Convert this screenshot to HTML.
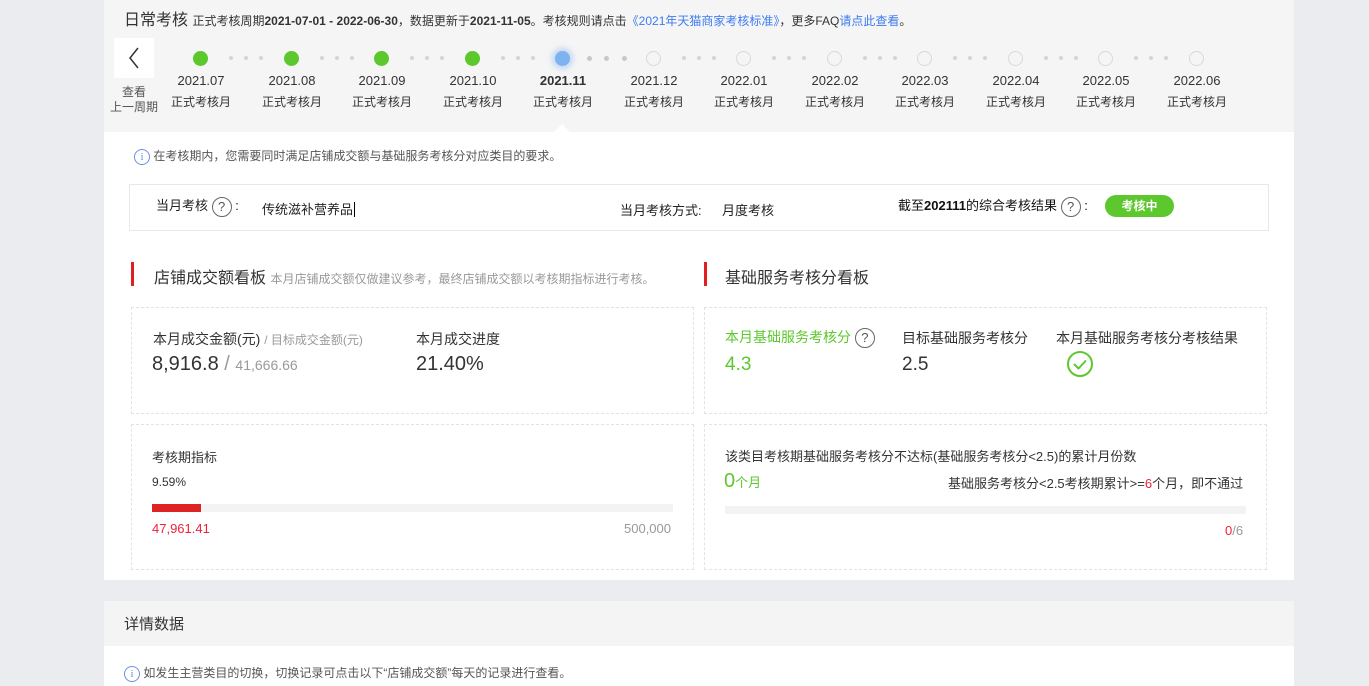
<!DOCTYPE html>
<html><head><meta charset="utf-8"><style>
*{margin:0;padding:0;box-sizing:border-box}
body{width:1369px;height:683px;background:#ebecef;font-family:"Liberation Sans","Noto Sans CJK SC",sans-serif;color:#333;position:relative;overflow:hidden}
.a{position:absolute;white-space:nowrap}
.top{position:absolute;left:104px;top:0;width:1190px;height:132px;background:#f5f5f5}
.main{position:absolute;left:104px;top:132px;width:1190px;height:448px;background:#fff}
.det{position:absolute;left:104px;top:601px;width:1190px;height:45px;background:#f4f4f4}
.det2{position:absolute;left:104px;top:646px;width:1190px;height:40px;background:#fff}
.c{position:absolute;width:15px;height:15px;border-radius:50%;top:51px}
.g{background:#5cc82e}
.e{border:1px solid #d9d9d9;background:#f5f5f5}
.d{position:absolute;width:4px;height:4px;border-radius:50%;background:#d5d5d5;top:56px}
.lab{position:absolute;width:80px;text-align:center;font-size:13px;color:#333}
.box{position:absolute;border:1px dashed #e3e3e3}
.q{display:inline-block;width:20px;height:20px;border:1px solid #666;border-radius:50%;font-size:13px;text-align:center;line-height:18px;color:#555;vertical-align:middle}
.info{display:inline-block;width:16px;height:16px;border:1px solid #6b8fe8;border-radius:50%;font-size:11px;text-align:center;line-height:14px;color:#6b8fe8;vertical-align:middle;font-family:"Liberation Serif",serif}
</style></head><body>
<div class="top"></div>
<div class="main"></div>
<div class="det"></div>
<div class="det2"></div>

<div class="a" style="left:124px;top:6px;font-size:16px;color:#333">日常考核 <span style="font-size:12px;color:#333">正式考核周期<b>2021-07-01 - 2022-06-30</b>，数据更新于<b>2021-11-05</b>。考核规则请点击<span style="color:#3d7cf0">《2021年天猫商家考核标准》</span>，更多FAQ<span style="color:#3d7cf0">请点此查看</span>。</span></div>

<div class="a" style="left:114px;top:38px;width:40px;height:40px;background:#fff;text-align:center"><svg width="40" height="40"><path d="M24 10 L16 20 L24 30" stroke="#333" stroke-width="1.5" fill="none"/></svg></div>
<div class="a" style="left:108px;top:85px;width:52px;text-align:center;font-size:12px;line-height:15px;color:#555;white-space:normal">查看<br>上一周期</div>

<div class="c g" style="left:193px"></div>
<div class="c g" style="left:284px"></div>
<div class="c g" style="left:374px"></div>
<div class="c g" style="left:465px"></div>
<div class="c" style="left:555px;background:#7fb2f0;box-shadow:0 0 6px 3px rgba(127,178,240,.45)"></div>
<div class="c e" style="left:646px"></div>
<div class="c e" style="left:736px"></div>
<div class="c e" style="left:827px"></div>
<div class="c e" style="left:917px"></div>
<div class="c e" style="left:1008px"></div>
<div class="c e" style="left:1098px"></div>
<div class="c e" style="left:1189px"></div>

<div class="d" style="left:229px"></div><div class="d" style="left:244px"></div><div class="d" style="left:259px"></div>
<div class="d" style="left:320px"></div><div class="d" style="left:335px"></div><div class="d" style="left:350px"></div>
<div class="d" style="left:410px"></div><div class="d" style="left:425px"></div><div class="d" style="left:440px"></div>
<div class="d" style="left:501px"></div><div class="d" style="left:516px"></div><div class="d" style="left:531px"></div>
<div class="d" style="left:587px;background:#c8c8c8;width:5px;height:5px"></div><div class="d" style="left:604px;background:#c8c8c8;width:5px;height:5px"></div><div class="d" style="left:622px;background:#c8c8c8;width:5px;height:5px"></div>
<div class="d" style="left:682px"></div><div class="d" style="left:697px"></div><div class="d" style="left:712px"></div>
<div class="d" style="left:772px"></div><div class="d" style="left:787px"></div><div class="d" style="left:802px"></div>
<div class="d" style="left:863px"></div><div class="d" style="left:878px"></div><div class="d" style="left:893px"></div>
<div class="d" style="left:953px"></div><div class="d" style="left:968px"></div><div class="d" style="left:983px"></div>
<div class="d" style="left:1044px"></div><div class="d" style="left:1059px"></div><div class="d" style="left:1074px"></div>
<div class="d" style="left:1134px"></div><div class="d" style="left:1149px"></div><div class="d" style="left:1164px"></div>

<div class="lab" style="left:161px;top:73px">2021.07</div><div class="lab" style="left:161px;top:93px;font-size:12px">正式考核月</div>
<div class="lab" style="left:252px;top:73px">2021.08</div><div class="lab" style="left:252px;top:93px;font-size:12px">正式考核月</div>
<div class="lab" style="left:342px;top:73px">2021.09</div><div class="lab" style="left:342px;top:93px;font-size:12px">正式考核月</div>
<div class="lab" style="left:433px;top:73px">2021.10</div><div class="lab" style="left:433px;top:93px;font-size:12px">正式考核月</div>
<div class="lab" style="left:523px;top:73px;font-weight:bold">2021.11</div><div class="lab" style="left:523px;top:93px;font-size:12px">正式考核月</div>
<div class="lab" style="left:614px;top:73px">2021.12</div><div class="lab" style="left:614px;top:93px;font-size:12px">正式考核月</div>
<div class="lab" style="left:704px;top:73px">2022.01</div><div class="lab" style="left:704px;top:93px;font-size:12px">正式考核月</div>
<div class="lab" style="left:795px;top:73px">2022.02</div><div class="lab" style="left:795px;top:93px;font-size:12px">正式考核月</div>
<div class="lab" style="left:885px;top:73px">2022.03</div><div class="lab" style="left:885px;top:93px;font-size:12px">正式考核月</div>
<div class="lab" style="left:976px;top:73px">2022.04</div><div class="lab" style="left:976px;top:93px;font-size:12px">正式考核月</div>
<div class="lab" style="left:1066px;top:73px">2022.05</div><div class="lab" style="left:1066px;top:93px;font-size:12px">正式考核月</div>
<div class="lab" style="left:1157px;top:73px">2022.06</div><div class="lab" style="left:1157px;top:93px;font-size:12px">正式考核月</div>
<div class="a" style="left:554px;top:124px;width:0;height:0;border-left:8px solid transparent;border-right:8px solid transparent;border-bottom:8px solid #fff"></div>

<div class="a" style="left:134px;top:147px;font-size:12px;color:#555"><span class="info">i</span> 在考核期内，您需要同时满足店铺成交额与基础服务考核分对应类目的要求。</div>

<div class="a" style="left:129px;top:184px;width:1140px;height:47px;border:1px solid #e8e8e8"></div>
<div class="a" style="left:156px;top:195px;font-size:13px;color:#222">当月考核 <span class="q">?</span> :</div>
<div class="a" style="left:262px;top:199px;font-size:13px;color:#222">传统滋补营养品<span style="border-left:1px solid #000;margin-left:1px"></span></div>
<div class="a" style="left:620px;top:200px;font-size:13px;color:#222">当月考核方式:</div>
<div class="a" style="left:722px;top:200px;font-size:13px;color:#222">月度考核</div>
<div class="a" style="left:898px;top:195px;font-size:13px;color:#111">截至<b>202111</b>的综合考核结果 <span class="q">?</span> :</div>
<div class="a" style="left:1105px;top:195px;width:69px;height:22px;border-radius:11px;background:#5cc82e;color:#fff;font-size:12px;font-weight:bold;text-align:center;line-height:22px">考核中</div>

<div class="a" style="left:131px;top:262px;width:3px;height:24px;background:#e02020"></div>
<div class="a" style="left:154px;top:264px;font-size:16px;color:#333">店铺成交额看板 <span style="font-size:12px;color:#999">本月店铺成交额仅做建议参考，最终店铺成交额以考核期指标进行考核。</span></div>
<div class="a" style="left:704px;top:262px;width:3px;height:24px;background:#e02020"></div>
<div class="a" style="left:725px;top:264px;font-size:16px;color:#333">基础服务考核分看板</div>

<div class="box" style="left:131px;top:307px;width:563px;height:107px"></div>
<div class="a" style="left:153px;top:329px;font-size:14px;color:#333">本月成交金额(元) <span style="color:#999;font-size:12px">/ 目标成交金额(元)</span></div>
<div class="a" style="left:152px;top:353px;font-size:20px;color:#333">8,916.8 <span style="color:#999">/</span> <span style="font-size:14px;color:#999">41,666.66</span></div>
<div class="a" style="left:416px;top:329px;font-size:14px;color:#333">本月成交进度</div>
<div class="a" style="left:416px;top:353px;font-size:20px;color:#333">21.40%</div>

<div class="box" style="left:131px;top:424px;width:563px;height:146px"></div>
<div class="a" style="left:152px;top:447px;font-size:13px;color:#333">考核期指标</div>
<div class="a" style="left:152px;top:475px;font-size:12px;color:#333">9.59%</div>
<div class="a" style="left:152px;top:504px;width:521px;height:8px;background:#f3f3f3"></div>
<div class="a" style="left:152px;top:504px;width:49px;height:8px;background:#dd2424"></div>
<div class="a" style="left:152px;top:521px;font-size:13px;color:#f0213a">47,961.41</div>
<div class="a" style="left:624px;top:521px;font-size:13px;color:#999">500,000</div>

<div class="box" style="left:704px;top:307px;width:563px;height:107px"></div>
<div class="a" style="left:725px;top:327px;font-size:14px;color:#5cc82e">本月基础服务考核分 <span class="q" style="color:#555">?</span></div>
<div class="a" style="left:725px;top:354px;font-size:19px;color:#5cc82e">4.3</div>
<div class="a" style="left:902px;top:328px;font-size:14px;color:#333">目标基础服务考核分</div>
<div class="a" style="left:902px;top:354px;font-size:19px;color:#333">2.5</div>
<div class="a" style="left:1056px;top:328px;font-size:14px;color:#333">本月基础服务考核分考核结果</div>
<div class="a" style="left:1066px;top:350px"><svg width="28" height="28"><circle cx="14" cy="14" r="12" stroke="#5cc82e" stroke-width="2" fill="none"/><path d="M8 14 L12.5 18.5 L20 10.5" stroke="#5cc82e" stroke-width="2" fill="none"/></svg></div>

<div class="box" style="left:704px;top:424px;width:563px;height:146px"></div>
<div class="a" style="left:725px;top:446px;font-size:13px;color:#333">该类目考核期基础服务考核分不达标(基础服务考核分&lt;2.5)的累计月份数</div>
<div class="a" style="left:724px;top:470px;font-size:20px;color:#5cc82e">0<span style="font-size:13px">个月</span></div>
<div class="a" style="left:948px;top:473px;font-size:13px;color:#333">基础服务考核分&lt;2.5考核期累计&gt;=<span style="color:#f0213a">6</span>个月，即不通过</div>
<div class="a" style="left:725px;top:506px;width:521px;height:8px;background:#f3f3f3"></div>
<div class="a" style="left:1225px;top:523px;font-size:13px;color:#999"><span style="color:#f0213a">0</span>/6</div>

<div class="a" style="left:124px;top:613px;font-size:15px;color:#333">详情数据</div>
<div class="a" style="left:124px;top:664px;font-size:12px;color:#555"><span class="info">i</span> 如发生主营类目的切换，切换记录可点击以下“店铺成交额”每天的记录进行查看。</div>
</body></html>
